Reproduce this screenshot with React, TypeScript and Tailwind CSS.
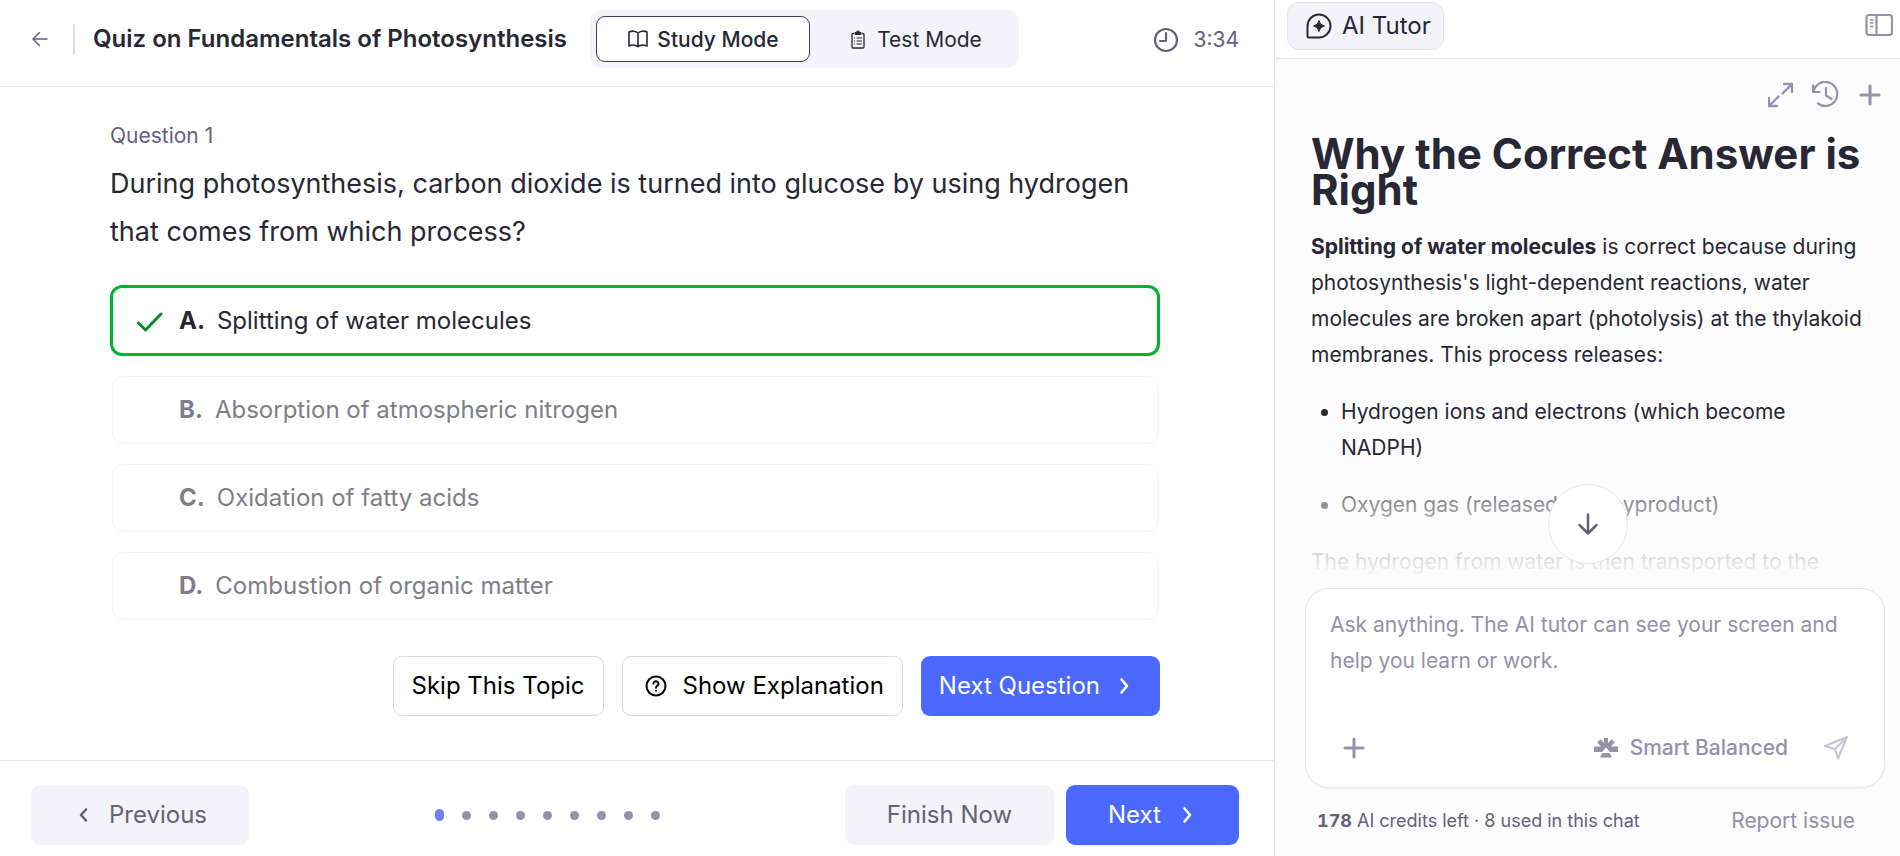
import { useState } from 'react';

const options = [
  { letter: 'A', text: 'Splitting of water molecules', correct: true },
  { letter: 'B', text: 'Absorption of atmospheric nitrogen', correct: false },
  { letter: 'C', text: 'Oxidation of fatty acids', correct: false },
  { letter: 'D', text: 'Combustion of organic matter', correct: false },
];

const questionCount = 9;

function Chevron({ left = false }: { left?: boolean }) {
  return (
    <svg className="h-6 w-6" viewBox="0 0 24 24" fill="none" stroke="currentColor" strokeWidth="2.6" strokeLinecap="round" strokeLinejoin="round" aria-hidden="true">
      <path d={left ? 'M13 6.500 8 12l5 5.500' : 'M9.500 5.500 15 12l-5.500 6.500'} />
    </svg>
  );
}

function PlusIcon() {
  return (
    <svg className="h-6 w-6" viewBox="0 0 24 24" fill="none" stroke="currentColor" strokeWidth="3" strokeLinecap="round" aria-hidden="true">
      <path d="M12 3v18M3 12h18" />
    </svg>
  );
}

function Header() {
  const [mode, setMode] = useState('study');
  const active = 'border-[#3f3d56] bg-white';
  const idle = 'border-transparent';

  return (
    <header className="flex h-[87px] shrink-0 items-start border-b border-[#e5e4ef] pt-[10px] pr-[35px] pl-7">
      <div className="flex h-[58px] items-center">
        <button type="button" aria-label="Back" className="flex h-6 w-6 items-center justify-center text-[#64617c]">
          <svg className="h-4 w-4" viewBox="0 0 16 16" fill="none" stroke="currentColor" strokeWidth="1.5" strokeLinecap="round" strokeLinejoin="round">
            <path d="M15 8H1.500M7.500 1.500 1 8l6.500 6.500" />
          </svg>
        </button>
        <div className="ml-[21px] h-[30px] w-0.5 bg-[#dcdbe6]"></div>
        <h1 className="ml-[18px] text-2xl font-semibold whitespace-nowrap">Quiz on Fundamentals of Photosynthesis</h1>
      </div>

      <div className="ml-[23px] flex h-[58px] rounded-xl bg-[#f4f3fa] p-[6px]">
        <button type="button" onClick={() => setMode('study')} className={`flex w-[214px] items-center justify-center gap-2 rounded-[9px] border pt-px text-[21px] font-medium ${mode === 'study' ? active : idle}`}>
          <svg className="h-[22px] w-[22px]" viewBox="0 0 22 22" fill="none" stroke="currentColor" strokeWidth="1.6" strokeLinejoin="round" aria-hidden="true">
            <path d="M11 4C9 2 5 1.500 2 3v14c3-1.300 7-1 9 .7 2-1.700 6-2 9-.7V3c-3-1.500-7-1-9 1zM11 4v13.500" />
          </svg>
          Study Mode
        </button>
        <button type="button" onClick={() => setMode('test')} className={`flex w-[203px] items-center justify-center gap-[11px] rounded-[9px] border pt-px pl-[9px] text-[21px] ${mode === 'test' ? active : idle}`}>
          <svg className="h-5 w-4" viewBox="0 0 16 20" fill="none" stroke="currentColor" strokeWidth="1.3" aria-hidden="true">
            <path d="M4 3.500H3q-1 0-1 1V17q0 1 1 1h10q1 0 1-1V4.500q0-1-1-1h-1" />
            <path d="M5 4.500V2.500h1.500a1.500 1.500 0 0 1 3 0H11v2z" fill="currentColor" strokeWidth="1" />
            <path d="M4 8h1M6.500 8H12M4 11h1M6.500 11H12M4 14h1M6.500 14H12" strokeWidth="1" />
          </svg>
          Test Mode
        </button>
      </div>

      <div className="ml-auto flex h-[58px] items-center gap-[14px] pt-px text-[21px] text-[#64617c]">
        <svg className="h-[26px] w-[26px]" viewBox="0 0 26 26" fill="none" stroke="currentColor" strokeWidth="2.2" strokeLinecap="round" strokeLinejoin="round" aria-hidden="true">
          <circle cx="13" cy="13" r="11" />
          <path d="M13 6v8H7" />
        </svg>
        <time>3:34</time>
      </div>
    </header>
  );
}

function Question() {
  return (
    <main className="flex-1 pt-[37px] pr-[114px] pl-[110px]">
      <p className="text-[21px] leading-6 text-[#64617c]">Question 1</p>
      <h2 className="mt-3 text-[27px] leading-[48px]">
        During photosynthesis, carbon dioxide is turned into glucose by using hydrogen that comes from which process?
      </h2>

      <div className="mt-[29px] flex flex-col gap-5">
        {options.map((option) => (
          <button
            key={option.letter}
            type="button"
            disabled={!option.correct}
            className={`flex items-center rounded-xl pl-[23px] text-left text-2xl ${
              option.correct
                ? 'h-[71px] border-[3px] border-[#00b432]'
                : 'mr-px ml-0.5 h-[68px] border border-[#f1f1f4] text-[#7f7e88]'
            }`}
          >
            <span className="flex w-[43px] text-[#078a25]">
              {option.correct && (
                <svg className="h-7 w-7" viewBox="0 0 28 28" fill="none" stroke="currentColor" strokeWidth="3" strokeLinecap="round" strokeLinejoin="round" aria-hidden="true">
                  <path d="M2.500 16 9.500 23 25 7" />
                </svg>
              )}
            </span>
            <span className="font-bold">{option.letter}.</span>
            <span className="ml-3">{option.text}</span>
          </button>
        ))}
      </div>

      <div className="mt-9 flex justify-end gap-[18px] text-2xl text-black">
        <button type="button" className="h-[60px] rounded-[9px] border border-[#d9d8e3] px-[18px]">Skip This Topic</button>
        <button type="button" className="flex h-[60px] items-center gap-[15px] rounded-[9px] border border-[#d9d8e3] pr-[18px] pl-[21px]">
          <svg className="h-6 w-6" viewBox="0 0 24 24" fill="none" stroke="currentColor" strokeWidth="2" strokeLinecap="round" aria-hidden="true">
            <circle cx="12" cy="12" r="9.5" />
            <path d="M9.500 9.500a2.500 2.500 0 1 1 4 2.200c-1 .6-1.500 1-1.500 2M12 16.700v.1" />
          </svg>
          Show Explanation
        </button>
        <button type="button" className="flex h-[60px] items-center gap-3 rounded-[9px] bg-[#4b69ff] pr-6 pl-[18px] text-white">
          Next Question
          <Chevron />
        </button>
      </div>
    </main>
  );
}

function Footer() {
  return (
    <footer className="flex h-24 shrink-0 items-start justify-between border-t border-[#e5e4ef] pt-6 pr-[35px] pl-[31px] text-2xl text-[#64617c]">
      <button type="button" className="flex h-[60px] w-[218px] items-center justify-center gap-3 rounded-[9px] bg-[#f4f3fa]">
        <Chevron left />
        Previous
      </button>
      <div className="flex h-[60px] items-center gap-[18px]">
        {Array.from({ length: questionCount }, (_, index) => (
          <button
            key={index}
            type="button"
            aria-label={`Question ${index + 1}`}
            className={index === 0 ? 'h-3 w-[9px] rounded-full bg-[#6b83ff]' : 'h-[9px] w-[9px] rounded-full bg-[#9391ab]'}
          />
        ))}
      </div>
      <div className="flex gap-3">
        <button type="button" className="h-[60px] w-[209px] rounded-[9px] bg-[#f4f3fa]">Finish Now</button>
        <button type="button" className="flex h-[60px] w-[173px] items-center justify-center gap-[14px] rounded-[9px] bg-[#4b69ff] pl-0.5 text-white">
          Next
          <Chevron />
        </button>
      </div>
    </footer>
  );
}

function TutorPanel() {
  return (
    <aside className="flex w-[626px] shrink-0 flex-col border-l border-[#e5e4ef] bg-[#fcfcfc]">
      <div className="flex h-[59px] shrink-0 items-start justify-between border-b border-[#e5e4ef] bg-white pt-0.5 pr-[7px] pl-3">
        <button type="button" className="flex h-12 items-center gap-[10px] rounded-xl border border-[#e5e4ef] bg-[#f4f3fa] pr-3 pl-[18px] text-2xl">
          <svg className="h-[26px] w-[26px]" viewBox="0 0 26 26" fill="none" stroke="currentColor" strokeWidth="2" strokeLinejoin="round" aria-hidden="true">
            <path d="M13 1.500A11.500 11.500 0 1 1 13 24.500H3q-1.500 0-1.500-1.500V13A11.500 11.500 0 0 1 13 1.500z" />
            <path d="M13 7.500q.8 4.700 5.500 5.500-4.700.8-5.500 5.500-.8-4.700-5.500-5.500 4.700-.8 5.500-5.500z" fill="currentColor" strokeWidth="1" />
          </svg>
          AI Tutor
        </button>
        <button type="button" aria-label="Toggle sidebar" className="flex h-[46px] items-center text-[#9391ab]">
          <svg className="h-7 w-7" viewBox="0 0 28 28" fill="none" stroke="currentColor" strokeWidth="2.2">
            <rect x="1.5" y="4" width="25.5" height="20" rx="2.5" />
            <path d="M11.500 4v20" />
            <path d="M5 9h3.500M5 12h3.500M5 15.500h3.500" strokeWidth="1.5" />
          </svg>
        </button>
      </div>

      <div className="flex h-16 shrink-0 items-center justify-end gap-[18px] pt-2 pr-[18px] text-[#9391ab]">
        <button type="button" aria-label="Expand">
          <svg className="h-[26px] w-[26px]" viewBox="0 0 26 26" fill="none" stroke="currentColor" strokeWidth="2.3" strokeLinecap="round" strokeLinejoin="round">
            <path d="M16 2h8v8M23.500 2.500 14.500 11.500M9 24H1v-8M1.500 23.500l9-9" />
          </svg>
        </button>
        <button type="button" aria-label="Chat history">
          <svg className="h-7 w-7" viewBox="0 0 28 28" fill="none" stroke="currentColor" strokeWidth="2.2" strokeLinecap="round" strokeLinejoin="round">
            <path d="M1 4.500V11h6.500M1.500 10.500A12 12 0 1 1 6 22.500M14 7v7.500L19.500 18" />
          </svg>
        </button>
        <button type="button" aria-label="New chat"><PlusIcon /></button>
      </div>

      <div className="relative min-h-0 flex-1 overflow-hidden">
        <article className="pt-[13px] pr-8 pl-9 text-[21px] leading-9">
          <h2 className="text-[42px] leading-9 font-bold">Why the Correct Answer is Right</h2>
          <p className="mt-[21px]">
            <strong>Splitting of water molecules</strong> is correct because during photosynthesis's light-dependent
            reactions, water molecules are broken apart (photolysis) at the thylakoid membranes. This process releases:
          </p>
          <ul className="mt-[21px] flex list-disc flex-col gap-[21px] pl-[30px]">
            <li>Hydrogen ions and electrons (which become NADPH)</li>
            <li>Oxygen gas (released as a byproduct)</li>
          </ul>
          <p className="mt-[21px]">The hydrogen from water is then transported to the</p>
        </article>
        {/* Fade over the end of the visible answer */}
        <div className="pointer-events-none absolute inset-x-0 bottom-0 h-32 bg-gradient-to-b from-[#fcfcfc]/0 via-[#fcfcfc]/50 via-35% to-[#fcfcfc] to-95%"></div>
        <button type="button" aria-label="Scroll to bottom" className="absolute bottom-6 left-1/2 flex h-20 w-20 -translate-x-1/2 items-center justify-center rounded-full border border-[#e5e4ef] bg-white text-[#64617c]">
          <svg className="h-6 w-6" viewBox="0 0 24 24" fill="none" stroke="currentColor" strokeWidth="2.5" strokeLinecap="round" strokeLinejoin="round">
            <path d="M12 2.500v19M3.500 13 12 21.500 20.500 13" />
          </svg>
        </button>
      </div>

      <form className="mr-[15px] ml-[30px] flex h-[200px] shrink-0 flex-col rounded-[24px] border border-[#e5e4ef] bg-white pt-[18px] shadow-xs" onSubmit={(e) => e.preventDefault()}>
        <textarea
          aria-label="Message the AI tutor"
          placeholder="Ask anything. The AI tutor can see your screen and help you learn or work."
          className="h-[117px] w-full resize-none px-6 text-[21px] leading-9 outline-none placeholder:text-[#9391ab]"
        />
        <div className="flex h-12 items-center pr-9 pl-9 text-[21px] text-[#9391ab]">
          <button type="button" aria-label="Add attachment"><PlusIcon /></button>
          <button type="button" className="ml-auto flex items-center gap-3 font-medium">
            <svg className="h-5 w-6" viewBox="0 0 24 20" fill="currentColor" aria-hidden="true">
              <path d="M10 0h4v5l3.500-3.800 3.300 3L17 8.500h7V14h-8L12 9.500 8 14H0V8.500h7L3.200 4.200l3.300-3L10 5z" />
              <path d="M8.500 15h7l2.500 4.500H6z" />
            </svg>
            Smart Balanced
          </button>
          <button type="submit" aria-label="Send" className="ml-9 text-[#c5c4d3]">
            <svg className="h-6 w-6" viewBox="0 0 24 24" fill="none" stroke="currentColor" strokeWidth="2" strokeLinejoin="round">
              <path d="M23 1 1 10l10 3 3 9.500zM23 1 11 13" />
            </svg>
          </button>
        </div>
      </form>

      <div className="flex h-[68px] shrink-0 items-center justify-between pr-[45px] pb-0.5 pl-[42px]">
        <p className="text-lg text-[#64617c]"><strong className="font-bold tabular-nums">178</strong> AI credits left · 8 used in this chat</p>
        <a href="#report" className="text-[21px] text-[#9391ab]">Report issue</a>
      </div>
    </aside>
  );
}

export default function App() {
  return (
    <div className="flex h-screen overflow-hidden bg-white font-['Inter',sans-serif] text-[#282735]">
      <div className="flex min-w-0 flex-1 flex-col">
        <Header />
        <Question />
        <Footer />
      </div>
      <TutorPanel />
    </div>
  );
}
